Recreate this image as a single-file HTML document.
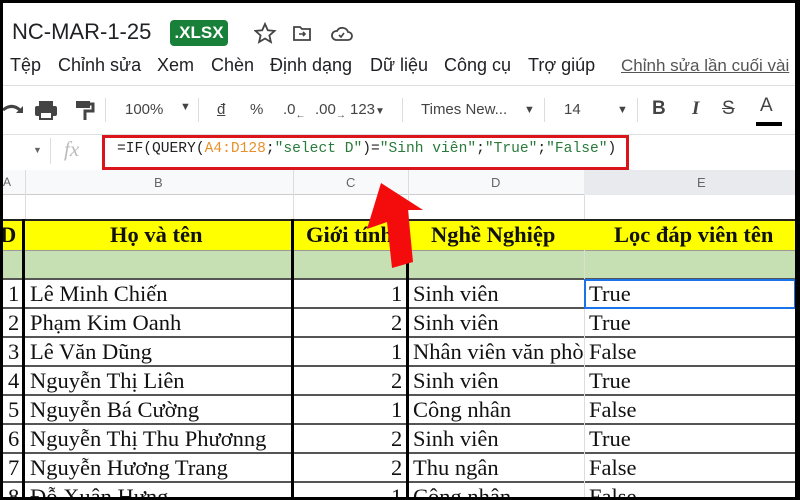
<!DOCTYPE html>
<html><head><meta charset="utf-8"><style>
*{margin:0;padding:0;box-sizing:border-box}
html,body{width:800px;height:500px;overflow:hidden}
body{background:#000;position:relative;font-family:"Liberation Sans",sans-serif}
#pg{position:absolute;left:3px;top:3px;width:792px;height:494px;background:#fff;overflow:hidden}
.a{position:absolute;white-space:nowrap}
.t{font-family:"Liberation Serif",serif;font-size:22.5px;color:#111}
.hl{position:absolute;height:2px;background:#555}
.vl{position:absolute;width:3px;background:#000}
.g{color:#444}
.m{position:absolute;top:55px;font-size:18px;color:#202124;white-space:nowrap}
.mono{font-family:"Liberation Mono",monospace;font-size:14.6px}
</style></head><body>
<div id="pg"></div>
<div class="a" style="left:12px;top:19px;font-size:22px;color:#202124">NC-MAR-1-25</div>
<div class="a" style="left:170px;top:20px;width:58px;height:26px;background:#188038;border-radius:4px;color:#fff;font-size:17px;font-weight:bold;text-align:center;line-height:26px">.XLSX</div>
<svg class="a" style="left:254px;top:22px" width="100" height="22" viewBox="0 0 100 22">
<path d="M11 2l2.8 6.3 6.7.6-5.1 4.5 1.5 6.6L11 16.5 5.1 20l1.5-6.6L1.5 8.9l6.7-.6z" fill="none" stroke="#444" stroke-width="1.8"/>
<path d="M40 5h6l2 2h8v11H40z" fill="none" stroke="#444" stroke-width="1.8"/><path d="M45 12h6M49 10l2 2-2 2" stroke="#444" stroke-width="1.6" fill="none"/>
<path d="M82 18h12a4 4 0 0 0 0-8 6 6 0 0 0-11-1 4.5 4.5 0 0 0-1 9z" fill="none" stroke="#444" stroke-width="1.8"/><path d="M85 13l2 2 3-4" stroke="#444" stroke-width="1.6" fill="none"/>
</svg>
<div class="m" style="left:10px">Tệp</div>
<div class="m" style="left:58px">Chỉnh sửa</div>
<div class="m" style="left:157px">Xem</div>
<div class="m" style="left:211px">Chèn</div>
<div class="m" style="left:270px">Định dạng</div>
<div class="m" style="left:370px">Dữ liệu</div>
<div class="m" style="left:444px">Công cụ</div>
<div class="m" style="left:528px">Trợ giúp</div>
<div class="a" style="left:621px;top:56px;font-size:17px;color:#555;text-decoration:underline">Chỉnh sửa lần cuối vài</div>
<div class="a" style="left:3px;top:85px;width:792px;height:1px;background:#e0e0e0"></div>
<svg class="a" style="left:3px;top:98px" width="100" height="24" viewBox="0 0 100 24">
<path d="M0 12c6-5 12-5 18 1" stroke="#444" stroke-width="3" fill="none"/><path d="M20 8v7h-7" fill="#444"/>
<rect x="36" y="3" width="14" height="5" fill="#444"/><rect x="32" y="8" width="22" height="10" rx="2" fill="#444"/><rect x="37" y="14" width="12" height="7" fill="#fff" stroke="#444" stroke-width="2"/>
<rect x="73" y="3" width="14" height="7" fill="#444"/><path d="M87 6h3v7h-8v9" stroke="#444" stroke-width="3" fill="none"/>
</svg>
<div class="a" style="left:105px;top:98px;width:1px;height:24px;background:#ddd"></div>
<div class="a g" style="left:125px;top:101px;font-size:15px">100%</div>
<div class="a g" style="left:180px;top:101px;font-size:11px">▼</div>
<div class="a" style="left:198px;top:98px;width:1px;height:24px;background:#ddd"></div>
<div class="a g" style="left:217px;top:101px;font-size:15px;text-decoration:underline">đ</div>
<div class="a g" style="left:250px;top:101px;font-size:15px">%</div>
<div class="a g" style="left:283px;top:101px;font-size:15px">.0<sub style="font-size:10px">←</sub></div>
<div class="a g" style="left:315px;top:101px;font-size:15px">.00<sub style="font-size:10px">→</sub></div>
<div class="a g" style="left:350px;top:101px;font-size:15px">123<span style="font-size:10px">▼</span></div>
<div class="a" style="left:402px;top:98px;width:1px;height:24px;background:#ddd"></div>
<div class="a g" style="left:421px;top:101px;font-size:15px">Times New...</div>
<div class="a g" style="left:524px;top:104px;font-size:11px">▼</div>
<div class="a" style="left:544px;top:98px;width:1px;height:24px;background:#ddd"></div>
<div class="a g" style="left:564px;top:101px;font-size:15px">14</div>
<div class="a g" style="left:617px;top:104px;font-size:11px">▼</div>
<div class="a" style="left:637px;top:98px;width:1px;height:24px;background:#ddd"></div>
<div class="a g" style="left:652px;top:98px;font-size:19px;font-weight:bold">B</div>
<div class="a g" style="left:692px;top:98px;font-size:19px;font-style:italic;font-family:'Liberation Serif',serif;font-weight:bold">I</div>
<div class="a g" style="left:722px;top:98px;font-size:19px;text-decoration:line-through">S</div>
<div class="a g" style="left:760px;top:95px;font-size:19px">A</div>
<div class="a" style="left:756px;top:122px;width:26px;height:4px;background:#000"></div>
<div class="a" style="left:3px;top:134px;width:792px;height:1px;background:#e0e0e0"></div>
<div class="a" style="left:33px;top:145px;font-size:9px;color:#666">▼</div>
<div class="a" style="left:50px;top:138px;width:1px;height:26px;background:#ddd"></div>
<div class="a" style="left:64px;top:137px;font-size:21px;font-style:italic;font-family:'Liberation Serif',serif;color:#bbb">fx</div>
<div class="a" style="left:102px;top:135px;width:527px;height:35px;border:3px solid #d9151b"></div>
<div class="a mono" style="left:117px;top:141px;color:#222">=IF(QUERY(<span style="color:#e8912b">A4:D128</span>;<span style="color:#2a7a3b">"select D"</span>)=<span style="color:#2a7a3b">"Sinh viên"</span>;<span style="color:#2a7a3b">"True"</span>;<span style="color:#2a7a3b">"False"</span>)</div>
<div class="a" style="left:3px;top:170px;width:792px;height:25px;background:#f8f9fa;border-bottom:1px solid #ccc"></div>
<div class="a" style="left:25px;top:170px;width:1px;height:50px;background:#ddd"></div>
<div class="a" style="left:293px;top:170px;width:1px;height:50px;background:#ddd"></div>
<div class="a" style="left:408px;top:170px;width:1px;height:50px;background:#ddd"></div>
<div class="a" style="left:584px;top:170px;width:1px;height:50px;background:#ddd"></div>
<div class="a" style="left:584px;top:170px;width:211px;height:25px;background:#e8eaed"></div>
<div class="a" style="left:3px;top:175px;font-size:12px;color:#666">A</div>
<div class="a" style="left:154px;top:175px;font-size:13px;color:#666">B</div>
<div class="a" style="left:346px;top:175px;font-size:13px;color:#666">C</div>
<div class="a" style="left:491px;top:175px;font-size:13px;color:#666">D</div>
<div class="a" style="left:697px;top:175px;font-size:13px;color:#666">E</div>
<div class="a" style="left:3px;top:219px;width:792px;height:2px;background:#222"></div>
<div class="a" style="left:3px;top:221px;width:792px;height:29px;background:#ffff00"></div>
<div class="a t" style="left:0px;top:222px;font-weight:bold">D</div>
<div class="a t" style="left:110px;top:222px;font-weight:bold">Họ và tên</div>
<div class="a t" style="left:306px;top:222px;font-weight:bold">Giới tính</div>
<div class="a t" style="left:431px;top:222px;font-weight:bold">Nghề Nghiệp</div>
<div class="a t" style="left:614px;top:222px;font-weight:bold">Lọc đáp viên tên</div>
<div class="a" style="left:3px;top:250px;width:792px;height:28px;background:#c6e0b4;border-top:1px solid #999"></div>
<div class="hl" style="left:3px;top:278px;width:792px"></div>
<div class="a" style="left:0;top:0;width:800px;height:497px;overflow:hidden">
<div class="a t" style="left:8px;top:279px;line-height:29px">1<br>2<br>3<br>4<br>5<br>6<br>7<br>8</div>
<div class="a t" style="left:30px;top:279px;line-height:29px">Lê Minh Chiến<br>Phạm Kim Oanh<br>Lê Văn Dũng<br>Nguyễn Thị Liên<br>Nguyễn Bá Cường<br>Nguyễn Thị Thu Phươnng<br>Nguyễn Hương Trang<br>Đỗ Xuân Hưng</div>
<div class="a t" style="left:391px;top:279px;line-height:29px">1<br>2<br>1<br>2<br>1<br>2<br>2<br>1</div>
<div class="a t" style="left:413px;top:279px;line-height:29px;width:171px;overflow:hidden">Sinh viên<br>Sinh viên<br>Nhân viên văn phòng<br>Sinh viên<br>Công nhân<br>Sinh viên<br>Thu ngân<br>Công nhân</div>
<div class="a t" style="left:589px;top:279px;line-height:29px">True<br>True<br>False<br>True<br>False<br>True<br>False<br>False</div>
</div>
<div class="hl" style="left:3px;top:307px;width:792px"></div>
<div class="hl" style="left:3px;top:336px;width:792px"></div>
<div class="hl" style="left:3px;top:365px;width:792px"></div>
<div class="hl" style="left:3px;top:394px;width:792px"></div>
<div class="hl" style="left:3px;top:423px;width:792px"></div>
<div class="hl" style="left:3px;top:452px;width:792px"></div>
<div class="hl" style="left:3px;top:481px;width:792px"></div>
<div class="a" style="left:584px;top:250px;width:1px;height:247px;background:#ddd"></div>
<div class="a" style="left:584px;top:279px;width:212px;height:30px;border:2px solid #1a73e8"></div>
<div class="vl" style="left:22px;top:219px;height:280px"></div>
<div class="vl" style="left:291px;top:219px;height:280px"></div>
<div class="vl" style="left:406px;top:219px;height:280px"></div>
<svg class="a" style="left:0;top:0" width="800" height="500"><polygon points="381,183 423,210 408,210 413,262 392,268 387,222 367,229" fill="#f40b0b"/></svg>
<div class="a" style="left:0;top:0;width:800px;height:3px;background:#000"></div>
<div class="a" style="left:0;top:497px;width:800px;height:3px;background:#000"></div>
<div class="a" style="left:0;top:0;width:3px;height:500px;background:#000"></div>
<div class="a" style="left:795px;top:0;width:5px;height:500px;background:#000"></div>
</body></html>
